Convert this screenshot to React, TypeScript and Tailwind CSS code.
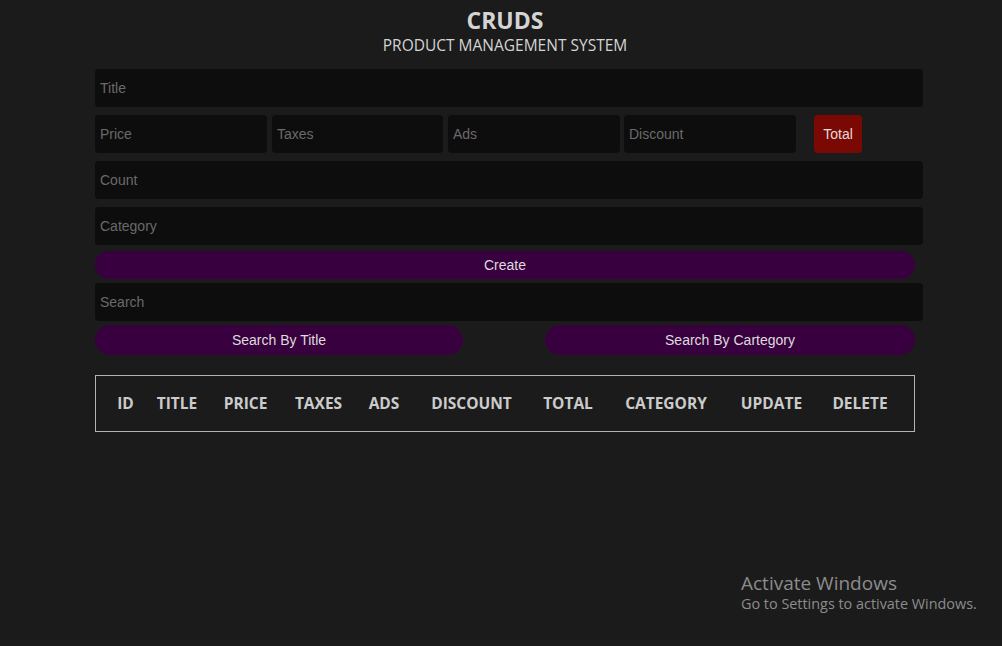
import React from "react";

const inputCls =
  "h-[38px] bg-[#0d0d0d] rounded-[4px] px-[5px] text-[14px] text-[#cfcfcf] placeholder-[#6a6a6a] outline-none border-none";

const headers: [string, number][] = [
  ["ID", 59],
  ["TITLE", 44],
  ["PRICE", 93],
  ["TAXES", 53],
  ["ADS", 78],
  ["DISCOUNT", 97],
  ["TOTAL", 96],
  ["CATEGORY", 100],
  ["UPDATE", 111],
  ["DELETE", 66],
];

export default function App() {
  return (
    <div
      className="relative w-[1002px] h-[646px] bg-[#1b1b1b] overflow-hidden"
      style={{ fontFamily: '"Liberation Sans", Arial, sans-serif' }}
    >
      <div className="ml-[95px] w-[820px] flex flex-col">
        <div
          className="flex flex-col items-center pt-[5px] text-[#d4d4d4]"
          style={{ fontFamily: '"Open Sans", "Noto Sans", sans-serif' }}
        >
          <h1 className="text-[23px] font-bold leading-[30px]">CRUDS</h1>
          <p className="text-[15.5px] leading-[22px] mt-[-1px]">PRODUCT MANAGEMENT SYSTEM</p>
        </div>

        <div className="flex flex-col mt-[13px]">
          <input placeholder="Title" className={`${inputCls} w-[828px]`} />

          <div className="flex items-center mt-[8px]">
            <input placeholder="Price" className={`${inputCls} w-[172px]`} />
            <input placeholder="Taxes" className={`${inputCls} w-[171px] ml-[5px]`} />
            <input placeholder="Ads" className={`${inputCls} w-[172px] ml-[5px]`} />
            <input placeholder="Discount" className={`${inputCls} w-[172px] ml-[4px]`} />
            <div className="ml-[18px] w-[48px] h-[38px] rounded-[4px] bg-[#7a0904] text-[#e6dada] text-[14px] flex items-center justify-center">
              Total
            </div>
          </div>

          <input placeholder="Count" className={`${inputCls} w-[828px] mt-[8px]`} />
          <input placeholder="Category" className={`${inputCls} w-[828px] mt-[8px]`} />

          <button className="mt-[6px] w-[820px] h-[28px] rounded-full bg-[#39003f] text-[#dcdcdc] text-[14px]">
            Create
          </button>

          <input placeholder="Search" className={`${inputCls} w-[828px] mt-[4px]`} />

          <div className="flex justify-between mt-[4px]">
            <button className="w-[368px] h-[30px] rounded-full bg-[#39003f] text-[#dcdcdc] text-[14px]">
              Search By Title
            </button>
            <button className="w-[370px] h-[30px] rounded-full bg-[#39003f] text-[#dcdcdc] text-[14px]">
              Search By Cartegory
            </button>
          </div>
        </div>

        <div
          className="mt-[20px] h-[57px] border border-[#b4b4b4] flex items-center text-[#cbcbcb] font-bold text-[15.5px]"
          style={{ fontFamily: '"Open Sans", "Noto Sans", sans-serif' }}
        >
          {headers.map(([h, w]) => (
            <div key={h} className="text-center whitespace-nowrap shrink-0" style={{ width: w }}>
              {h}
            </div>
          ))}
        </div>
      </div>

      <div
        className="absolute left-[741px] top-[570px] text-[#8c8c8c]"
        style={{ fontFamily: '"Open Sans", "Noto Sans", sans-serif' }}
      >
        <div className="text-[19px] leading-[26px]">Activate Windows</div>
        <div className="text-[14.4px] leading-[20px] mt-[-2px]">Go to Settings to activate Windows.</div>
      </div>
    </div>
  );
}
